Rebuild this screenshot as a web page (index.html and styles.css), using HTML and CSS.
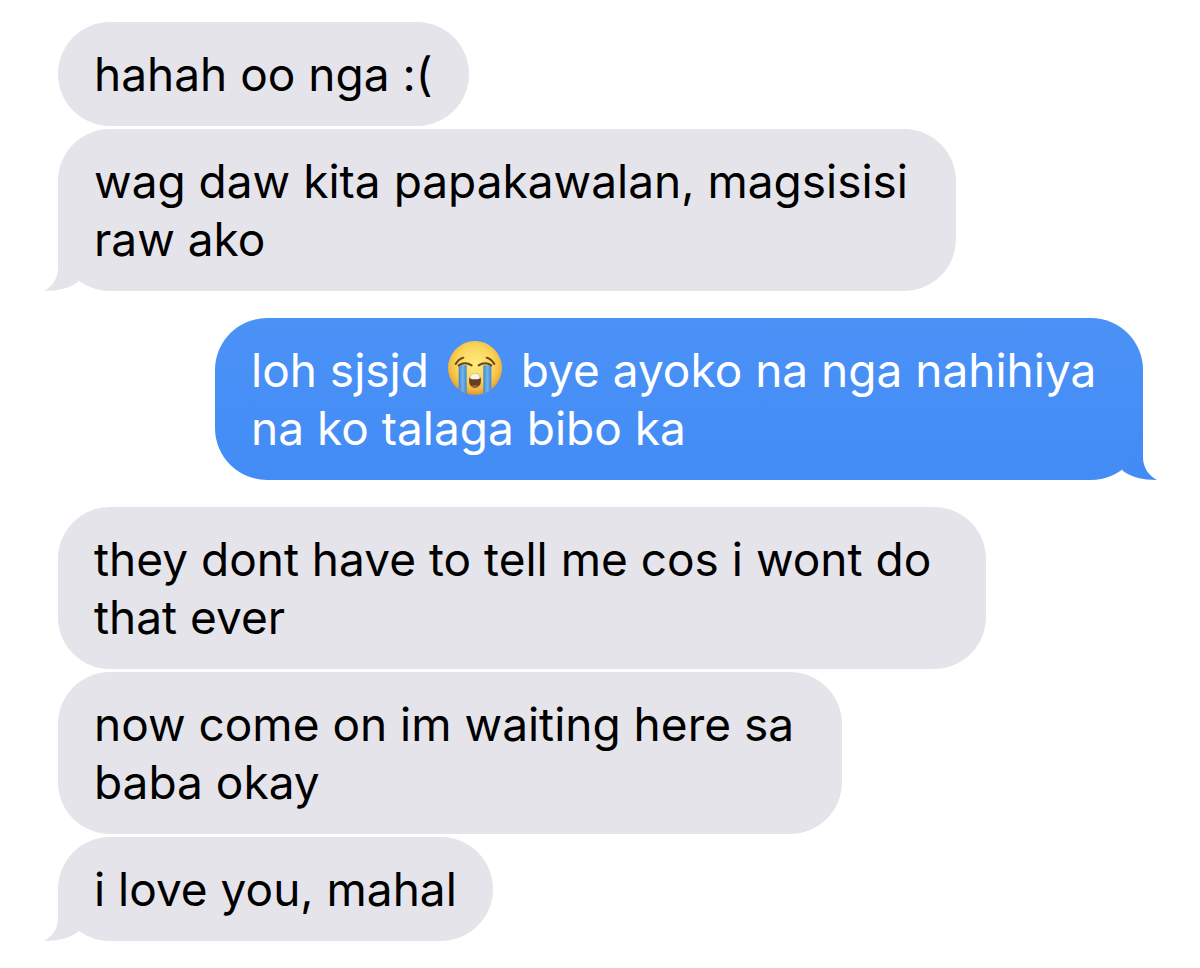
FILE: index.html
```html
<!DOCTYPE html>
<html lang="tl">
  <head>
    <meta charset="UTF-8" />
    <meta name="viewport" content="width=device-width, initial-scale=1.0" />
    <title>Messages</title>
    <link rel="stylesheet" href="styles.css">
  </head>

  <body>
    <main class="chat">
      <div class="group received">
        <p class="bubble">hahah oo nga :(</p>
        <p class="bubble wrapped">
          wag daw kita papakawalan, magsisisi<br />raw ako
          <svg class="tail" viewBox="0 0 36 52" aria-hidden="true">
            <path d="M14 0V29C14 39 9 47 0 52C14 52 27 49 35 42Z" />
          </svg>
        </p>
      </div>

      <div class="group sent">
        <p class="bubble wide">
          loh sjsjd
          <svg class="emoji" viewBox="0 0 162 162" role="img" aria-label="loudly crying face">
            <defs>
              <radialGradient id="face" cx="50%" cy="42%" r="58%">
                <stop offset="0" stop-color="#ffec80" />
                <stop offset="0.6" stop-color="#fad458" />
                <stop offset="0.85" stop-color="#f2b640" />
                <stop offset="1" stop-color="#dc9238" />
              </radialGradient>
              <linearGradient id="tear" x1="0" x2="1" y1="0" y2="0">
                <stop offset="0" stop-color="#4087d0" />
                <stop offset="0.5" stop-color="#72b4f0" />
                <stop offset="1" stop-color="#4087d0" />
              </linearGradient>
              <clipPath id="mouth">
                <ellipse cx="81" cy="119" rx="18" ry="22" />
              </clipPath>
            </defs>
            <circle cx="81" cy="81" r="81" fill="url(#face)" />
            <path d="M32 73H56V158Q43 152 32 145Z" fill="url(#tear)" />
            <path d="M106 73H130V145Q119 153 106 158Z" fill="url(#tear)" />
            <g fill="none" stroke="#6b421c" stroke-width="6" stroke-linecap="round">
              <path d="M23 69Q31 55 46 50" />
              <path d="M139 69Q131 55 116 50" />
              <path d="M32 73Q51 61 71 73" />
              <path d="M92 73Q111 61 130 73" />
            </g>
            <g clip-path="url(#mouth)">
              <path d="M60 95H102V145H60Z" fill="#68401f" />
              <path d="M66 95H96V108Q96 115 89 115H73Q66 115 66 108Z" fill="#f7f4ef" />
              <ellipse cx="81" cy="141" rx="14" ry="9" fill="#9c6034" />
            </g>
          </svg>
          bye ayoko na nga nahihiya<br />na ko talaga bibo ka
          <svg class="tail" viewBox="0 0 36 52" aria-hidden="true">
            <path d="M14 0V29C14 39 9 47 0 52C14 52 27 49 35 42Z" />
          </svg>
        </p>
      </div>

      <div class="group received">
        <p class="bubble wide">they dont have to tell me cos i wont do<br />that ever</p>
        <p class="bubble wrapped">now come on im waiting here sa<br />baba okay</p>
        <p class="bubble">
          i love you, mahal
          <svg class="tail" viewBox="0 0 36 52" aria-hidden="true">
            <path d="M14 0V29C14 39 9 47 0 52C14 52 27 49 35 42Z" />
          </svg>
        </p>
      </div>
    </main>
  </body>
</html>
```

FILE: styles.css
```css
* {
  padding: 0;
  margin: 0;
  box-sizing: border-box;
}

body {
  background-color: #fff;
  font-family: Inter, "Liberation Sans", sans-serif;
  font-size: 46px;
  line-height: 58px;
}

.chat {
  display: flex;
  flex-direction: column;
  gap: 27px;
  padding: 22px 57px 26px 58px;
}

.group {
  display: flex;
  flex-direction: column;
  gap: 3px;
}

.received {
  align-items: flex-start;
}

.sent {
  align-items: flex-end;
}

.bubble {
  position: relative;
  max-width: 100%;
  padding: 23px 36px;
  border-radius: 52px;
}

.wrapped {
  padding-right: 48px;
}

.wide {
  width: 928px;
}

.received .bubble {
  background-color: #e5e4ea;
  color: #000;
}

.sent .bubble {
  background: linear-gradient(#4a92f6, #438cf6);
  color: #fff;
}

/* little hook at the bottom corner of the last bubble */
.tail {
  position: absolute;
  bottom: 0;
  left: -14px;
  width: 36px;
  height: 52px;
  fill: #e5e4ea;
}

.sent .tail {
  left: auto;
  right: -14px;
  transform: scaleX(-1);
  fill: #438cf6;
}

.emoji {
  width: 54px;
  height: 54px;
  margin: 0 6px;
  vertical-align: -8px;
}
```
